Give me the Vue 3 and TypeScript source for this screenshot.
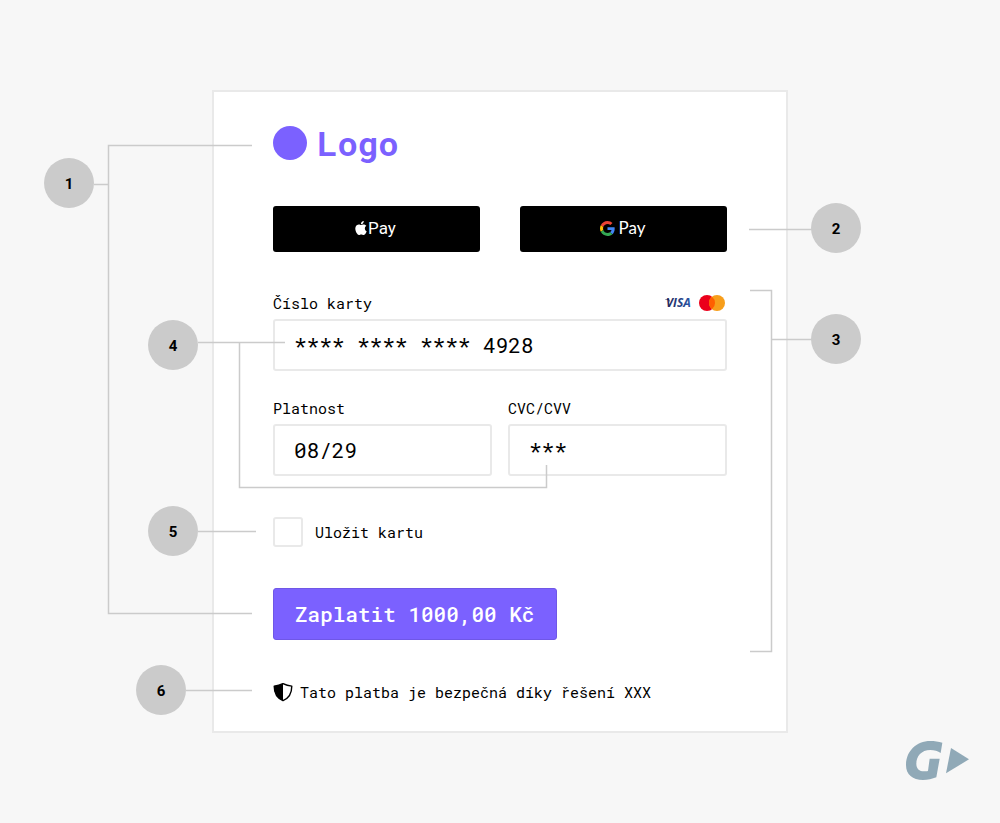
<script setup lang="ts">
import { ref } from 'vue'

interface Marker {
  label: string
  x: number
  y: number
}

const cardNumber = ref('**** **** **** 4928')
const expiry = ref('08/29')
const cvc = ref('***')
const saveCard = ref(false)

const markers: Marker[] = [
  { label: '1', x: 69, y: 183 },
  { label: '2', x: 836, y: 228 },
  { label: '3', x: 836, y: 339 },
  { label: '4', x: 173, y: 345 },
  { label: '5', x: 173, y: 531 },
  { label: '6', x: 161, y: 690 },
]

const connectors: string[] = [
  'M252 145.5H108.5V613.5H252M94 184.5H108.5',
  'M749 229.5H812',
  'M750 290.5H771.5V651.5H750M771.5 339.5H812',
  'M198 342.5H285M239.5 342.5V487.5H546.5V465',
  'M198 531.5H256',
  'M186 690.5H252',
]
</script>

<template>
  <main class="figure">
    <form class="card" @submit.prevent>
      <header class="brand">
        <span class="brand-dot"></span>
        <span class="brand-name">Logo</span>
      </header>

      <div class="wallets">
        <button type="button" class="wallet" aria-label="Apple Pay">
          <svg class="apple" viewBox="2 0 20 24" aria-hidden="true">
            <path fill="#fff" d="M12.152 6.896c-.948 0-2.415-1.078-3.96-1.04-2.04.027-3.91 1.183-4.961 3.014-2.117 3.675-.546 9.103 1.519 12.09 1.013 1.454 2.208 3.09 3.792 3.039 1.52-.065 2.09-.987 3.935-.987 1.831 0 2.35.987 3.96.948 1.637-.026 2.676-1.48 3.676-2.948 1.156-1.688 1.636-3.325 1.662-3.415-.039-.013-3.182-1.221-3.22-4.857-.026-3.04 2.48-4.494 2.597-4.559-1.429-2.09-3.623-2.324-4.39-2.376-2-.156-3.675 1.09-4.61 1.09zM15.53 3.83c.843-1.012 1.4-2.427 1.245-3.83-1.207.052-2.662.805-3.532 1.818-.78.896-1.454 2.338-1.273 3.714 1.338.104 2.715-.688 3.559-1.701" />
          </svg>
          <span class="apple-word">Pay</span>
        </button>
        <button type="button" class="wallet" aria-label="Google Pay">
          <svg class="google" viewBox="0 0 48 48" aria-hidden="true">
            <path fill="#EA4335" d="M24 9.5c3.54 0 6.71 1.22 9.21 3.6l6.85-6.85C35.9 2.38 30.47 0 24 0 14.62 0 6.51 5.38 2.56 13.22l7.98 6.19C12.43 13.72 17.74 9.5 24 9.5z" />
            <path fill="#4285F4" d="M46.98 24.55c0-1.57-.15-3.09-.38-4.55H24v9.02h12.94c-.58 2.96-2.26 5.48-4.78 7.18l7.73 6c4.51-4.18 7.09-10.36 7.09-17.65z" />
            <path fill="#FBBC05" d="M10.53 28.59c-.48-1.45-.76-2.99-.76-4.59s.27-3.14.76-4.59l-7.98-6.19C.92 16.46 0 20.12 0 24c0 3.88.92 7.54 2.56 10.78l7.97-6.19z" />
            <path fill="#34A853" d="M24 48c6.48 0 11.93-2.13 15.89-5.81l-7.73-6c-2.15 1.45-4.92 2.3-8.16 2.3-6.26 0-11.57-4.22-13.47-9.91l-7.98 6.19C6.51 42.62 14.62 48 24 48z" />
          </svg>
          <span class="google-word">Pay</span>
        </button>
      </div>

      <div class="fields">
        <div class="field wide">
          <div class="label-row">
            <label for="card-number">Číslo karty</label>
            <span class="schemes">
              <svg class="visa" viewBox="0 0 30 16" role="img" aria-label="Visa">
                <defs>
                  <linearGradient id="visa-ink" x1="0" x2="1" y1="0" y2="0">
                    <stop offset="0" stop-color="#222459" />
                    <stop offset="1" stop-color="#2a56a8" />
                  </linearGradient>
                </defs>
                <path fill="#222459" d="M1 4H5L6 7C5 5.500 3 4.600 1 4.300Z" />
                <text x="2" y="12" fill="url(#visa-ink)">VISA</text>
              </svg>
              <svg class="mastercard" viewBox="0 0 26 16" role="img" aria-label="Mastercard">
                <circle cx="8" cy="8" r="8" fill="#eb001b" />
                <circle cx="18" cy="8" r="8" fill="#f79e1b" />
                <path fill="#ff5f00" d="M13 1.755a8 8 0 0 1 0 12.490a8 8 0 0 1 0-12.490z" />
              </svg>
            </span>
          </div>
          <input id="card-number" v-model="cardNumber" type="text" autocomplete="off" />
        </div>
        <div class="field">
          <div class="label-row"><label for="expiry">Platnost</label></div>
          <input id="expiry" v-model="expiry" type="text" autocomplete="off" />
        </div>
        <div class="field">
          <div class="label-row"><label for="cvc">CVC/CVV</label></div>
          <input id="cvc" v-model="cvc" type="text" autocomplete="off" />
        </div>
      </div>

      <label class="save" for="save-card">
        <input id="save-card" v-model="saveCard" type="checkbox" />
        <span>Uložit kartu</span>
      </label>

      <button type="submit" class="submit">Zaplatit 1000,00 Kč</button>

      <p class="secure">
        <svg class="shield" viewBox="0 0 20 20" aria-hidden="true">
          <path fill="#fff" stroke="#000" stroke-width="1.400" stroke-linejoin="round" d="M10 1.700C7.500 3 4.500 3.900 1.200 4.100C1.200 11 4 16.300 10 18.700C16 16.300 18.800 11 18.800 4.100C15.500 3.900 12.500 3 10 1.700Z" />
          <path d="M10 1.500V18.800C4 16.300 1 11 1 4C4.500 3.900 7.500 3 10 1.500Z" />
        </svg>
        <span>Tato platba je bezpečná díky řešení XXX</span>
      </p>
    </form>

    <footer class="footer">
      <svg class="mark" viewBox="33 33 189 117" role="img" aria-label="GoPay">
        <path d="M142 38C131 35 118 33 106 33C62 33 33 66 33 105C33 134 53 150 84 150C98 150 112 147 124 142L134 86H104L99 122C96 124 92 124 88 124C72 124 64 116 64 101C64 79 79 60 106 60C118 60 129 63 137 69Z" />
        <path d="M168 54L222 88L153 130Z" />
      </svg>
    </footer>

    <div class="overlay">
      <svg class="lines" viewBox="0 0 1000 823" aria-hidden="true">
        <path v-for="d in connectors" :key="d" :d="d" />
      </svg>
      <span
        v-for="m in markers"
        :key="m.label"
        class="marker"
        :style="{ left: m.x + 'px', top: m.y + 'px' }"
      >{{ m.label }}</span>
    </div>
  </main>
</template>

<style>
body {
  margin: 0;
  background: #f7f7f7;
}
</style>

<style scoped>
* {
  box-sizing: border-box;
}

.figure {
  position: relative;
  min-height: 100vh;
  padding-top: 90px;
  background: #f7f7f7;
  color: #000;
  font: 15px/20px "Roboto Mono", "DejaVu Sans Mono", "Liberation Mono", monospace;
}

.card {
  display: flex;
  flex-direction: column;
  align-items: stretch;
  gap: 41px;
  max-width: 576px;
  margin: 0 auto;
  padding: 34px 59px 28px;
  background: #fff;
  border: 2px solid #e9e9e9;
}

.brand {
  display: flex;
  align-items: center;
  gap: 10px;
  height: 39px;
  padding-bottom: 5px;
  color: #7b61ff;
}

.brand-dot {
  width: 34px;
  height: 34px;
  border-radius: 50%;
  background: #7b61ff;
}

.brand-name {
  font-size: 34px;
  line-height: 34px;
  font-weight: 700;
}

.wallets {
  display: grid;
  grid-template-columns: 1fr 1fr;
  gap: 40px;
}

.wallet {
  display: flex;
  align-items: center;
  justify-content: center;
  height: 46px;
  padding: 0 2px 2px 0;
  border: 0;
  border-radius: 3px;
  background: #000;
  color: #fff;
}

.apple {
  width: 12px;
  height: 14px;
}

.apple-word {
  margin-left: 1px;
  font: 17px/20px Roboto, sans-serif;
}

.google {
  width: 15px;
  height: 15px;
}

.google-word {
  margin-left: 4px;
  font: 17px/20px Lato, sans-serif;
}

.fields {
  display: grid;
  grid-template-columns: 1fr 1fr;
  gap: 27px 16px;
}

.wide {
  grid-column: 1 / -1;
}

.label-row {
  display: flex;
  align-items: center;
  justify-content: space-between;
  height: 20px;
  margin-bottom: 6px;
}

.schemes {
  display: flex;
  align-items: center;
  gap: 5px;
  padding-right: 2px;
}

.visa {
  width: 30px;
  height: 16px;
}

.visa text {
  font: italic 700 12px "Open Sans", sans-serif;
}

.mastercard {
  width: 26px;
  height: 16px;
}

.field input {
  display: block;
  width: 100%;
  height: 52px;
  padding: 0 19px;
  border: 2px solid #e9e9e9;
  border-radius: 3px;
  background: #fff;
  color: #000;
  font-family: inherit;
  font-size: 21px;
}

.save {
  display: flex;
  align-items: center;
  gap: 12px;
}

.save input {
  appearance: none;
  width: 30px;
  height: 30px;
  margin: 0;
  border: 2px solid #e9e9e9;
  border-radius: 3px;
  background: #fff;
}

.save input:checked {
  background: #7b61ff;
}

.submit {
  align-self: flex-start;
  height: 52px;
  padding: 0 22px 0 21px;
  border: 1px solid #6f57e6;
  border-radius: 3px;
  background: #7b61ff;
  color: #fff;
  font-family: inherit;
  font-size: 21px;
  font-weight: 500;
}

.secure {
  display: flex;
  align-items: center;
  gap: 7px;
  height: 22px;
  margin: 0;
  white-space: nowrap;
}

.shield {
  width: 20px;
  height: 20px;
}

.footer {
  display: flex;
  justify-content: flex-end;
  padding: 8px 31px 20px;
}

.mark {
  width: 63px;
  height: 39px;
  fill: #90a9b7;
}

.overlay {
  position: absolute;
  top: 0;
  left: 50%;
  width: 1000px;
  height: 0;
  margin-left: -500px;
  pointer-events: none;
}

.lines {
  display: block;
  width: 1000px;
  height: 823px;
  fill: none;
  stroke: #cbcbcb;
  stroke-width: 1.500;
}

.marker {
  position: absolute;
  width: 50px;
  height: 50px;
  margin: -25px 0 0 -25px;
  border-radius: 50%;
  background: #cbcbcb;
  text-align: center;
  font: 700 15px/52px Roboto, sans-serif;
}
</style>
